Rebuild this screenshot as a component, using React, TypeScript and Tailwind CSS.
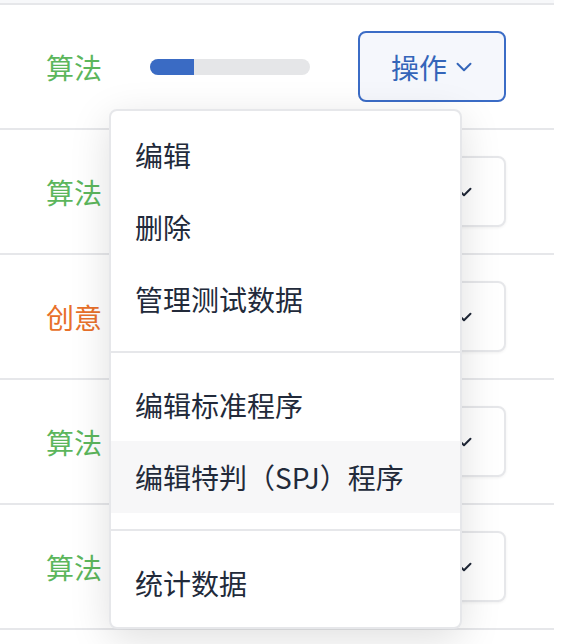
import { ChevronDown } from "lucide-react";

interface Row {
  kind: string;
  tone: "green" | "orange";
  progress: number;
}

const rows: Row[] = [
  { kind: "算法", tone: "green", progress: 27.5 },
  { kind: "算法", tone: "green", progress: 40 },
  { kind: "创意", tone: "orange", progress: 60 },
  { kind: "算法", tone: "green", progress: 30 },
  { kind: "算法", tone: "green", progress: 50 },
];

const menuGroups = [
  ["编辑", "删除", "管理测试数据"],
  ["编辑标准程序", "编辑特判（SPJ）程序"],
  ["统计数据"],
];

function ActionButton({ active }: { active: boolean }) {
  return (
    <button
      className={
        active
          ? "flex h-[71px] w-[148px] items-center justify-center gap-[4px] rounded-lg border-2 border-[#3b6cc6] bg-[#f5f7fc] pl-[4px] text-[#3465b9]"
          : "flex h-[71px] w-[148px] items-center justify-center gap-[4px] rounded-lg border-2 border-[#e6e7ea] bg-white pl-[4px] text-[#1f2737] shadow-[0_1px_3px_rgba(0,0,0,0.06)]"
      }
    >
      <span className="text-[28px] leading-none">操作</span>
      <ChevronDown className="h-[26px] w-[26px]" strokeWidth={1.8} />
    </button>
  );
}

export default function App() {
  return (
    <div
      className="relative h-[644px] w-[578px] overflow-hidden bg-white"
      style={{ fontFamily: '"Noto Sans CJK SC", "Noto Sans", sans-serif' }}
    >
      <div className="w-[554px]">
        <div className="h-[5px] border-b-2 border-[#e6e7ea] bg-[#f7f8fa]" />
        {rows.map((r, i) => (
          <div
            key={i}
            className="flex h-[125px] items-center border-b-2 border-[#e6e7ea]"
          >
            <span
              className={
                r.tone === "green"
                  ? "w-[150px] pl-[46px] text-[28px] text-[#5cb65c]"
                  : "w-[150px] pl-[46px] text-[28px] text-[#e8702a]"
              }
            >
              {r.kind}
            </span>
            <div className="h-4 w-[160px] overflow-hidden rounded-full bg-[#e5e6e8]">
              <div
                className="h-full bg-[#3a6bc4]"
                style={{ width: `${r.progress}%` }}
              />
            </div>
            <div className="w-[48px]" />
            <ActionButton active={i === 0} />
          </div>
        ))}
      </div>

      <div className="absolute left-[109px] top-[109px] w-[353px] rounded-lg border-2 border-[#e6e7ea] bg-white py-2 shadow-[0_10px_40px_rgba(0,0,0,0.13)]">
        {menuGroups.map((group, gi) => (
          <div key={gi}>
            {gi > 0 && <div className="my-4 h-[2px] bg-[#e6e7ea]" />}
            {group.map((item) => (
              <div
                key={item}
                className={
                  item === "编辑特判（SPJ）程序"
                    ? "flex h-[72px] items-center bg-[#f7f7f8] px-6 text-[28px] text-[#222a3a]"
                    : "flex h-[72px] items-center px-6 text-[28px] text-[#222a3a]"
                }
              >
                {item}
              </div>
            ))}
          </div>
        ))}
      </div>
    </div>
  );
}
